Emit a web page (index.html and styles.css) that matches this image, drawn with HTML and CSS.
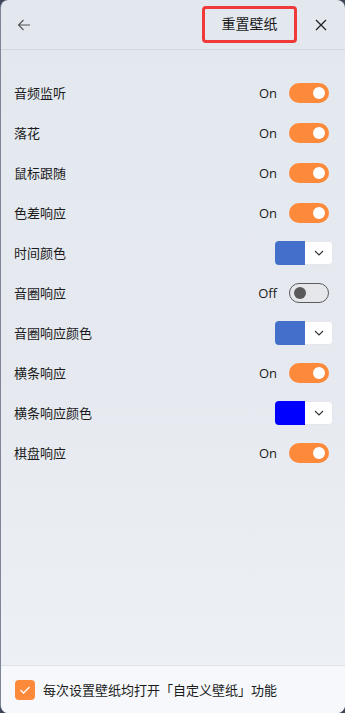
FILE: index.html
```html
<!DOCTYPE html>
<html lang="zh">
<head>
<meta charset="utf-8">
<link rel="stylesheet" href="styles.css">
</head>
<body>
<div class="dialog">
  <header class="header">
    <button class="icon-btn back" aria-label="back">
      <svg width="14" height="14" viewBox="0 0 14 14"><path d="M13 7H1.5M6.5 2L1.5 7l5 5" fill="none" stroke="#555" stroke-width="1.1"/></svg>
    </button>
    <div class="spacer"></div>
    <button class="reset">重置壁纸</button>
    <button class="icon-btn close" aria-label="close">
      <svg width="12" height="12" viewBox="0 0 12 12"><path d="M1 1L11 11M11 1L1 11" fill="none" stroke="#222" stroke-width="1.3"/></svg>
    </button>
  </header>
  <main class="content">
    <div class="row"><span class="label">音频监听</span><span class="state">On</span><span class="toggle on"></span></div>
    <div class="row"><span class="label">落花</span><span class="state">On</span><span class="toggle on"></span></div>
    <div class="row"><span class="label">鼠标跟随</span><span class="state">On</span><span class="toggle on"></span></div>
    <div class="row"><span class="label">色差响应</span><span class="state">On</span><span class="toggle on"></span></div>
    <div class="row"><span class="label">时间颜色</span><span class="picker"><span class="swatch" style="background:#4470cc"></span><span class="drop"><svg width="10" height="6" viewBox="0 0 10 6"><path d="M1 1l4 4 4-4" fill="none" stroke="#333" stroke-width="1.1"/></svg></span></span></div>
    <div class="row"><span class="label">音圈响应</span><span class="state">Off</span><span class="toggle off"></span></div>
    <div class="row"><span class="label">音圈响应颜色</span><span class="picker"><span class="swatch" style="background:#4470cc"></span><span class="drop"><svg width="10" height="6" viewBox="0 0 10 6"><path d="M1 1l4 4 4-4" fill="none" stroke="#333" stroke-width="1.1"/></svg></span></span></div>
    <div class="row"><span class="label">横条响应</span><span class="state">On</span><span class="toggle on"></span></div>
    <div class="row"><span class="label">横条响应颜色</span><span class="picker"><span class="swatch" style="background:#0000ff"></span><span class="drop"><svg width="10" height="6" viewBox="0 0 10 6"><path d="M1 1l4 4 4-4" fill="none" stroke="#333" stroke-width="1.1"/></svg></span></span></div>
    <div class="row"><span class="label">棋盘响应</span><span class="state">On</span><span class="toggle on"></span></div>
  </main>
  <footer class="footer">
    <span class="checkbox"><svg width="12" height="10" viewBox="0 0 12 10"><path d="M1.5 5l3 3 6-6" fill="none" stroke="#fff" stroke-width="1.3"/></svg></span>
    <span class="foot-text">每次设置壁纸均打开「自定义壁纸」功能</span>
  </footer>
</div>
</body>
</html>
```
FILE: styles.css
```css
html, body {
  margin: 0;
  padding: 0;
  height: 100%;
}
body {
  background: #3d4558;
  font-family: "Noto Sans CJK SC", "Noto Sans", sans-serif;
  color: #1b1b1b;
}
.dialog {
  box-sizing: border-box;
  height: 713px;
  width: 345px;
  border-radius: 8px;
  border-left: 1px solid #7d8597;
  background: linear-gradient(180deg, #e3e8ef 0%, #e6eaf0 55%, #eef1f6 100%);
  display: flex;
  flex-direction: column;
  overflow: hidden;
}
.header {
  height: 50px;
  box-sizing: border-box;
  border-bottom: 1px solid #d3d8e0;
  display: flex;
  align-items: center;
  padding: 0 10px 0 8px;
}
.icon-btn {
  border: none;
  background: transparent;
  width: 28px;
  height: 28px;
  padding: 0;
  display: flex;
  align-items: center;
  justify-content: center;
}
.back { margin-left: 1px; }
.spacer { flex: 1; }
.reset {
  font-family: inherit;
  font-size: 14px;
  color: #1b1b1b;
  background: transparent;
  border: 3px solid #f03a3a;
  border-radius: 4px;
  width: 95px;
  height: 37px;
  padding: 0 0 2px 0;
  margin-right: 10px;
  margin-top: -1px;
}
.content {
  flex: 1;
  padding: 23px 12px 0 13px;
}
.row {
  height: 40px;
  display: flex;
  align-items: center;
}
.label {
  flex: 1;
  font-size: 13px;
  padding-bottom: 1px;
}
.state {
  font-family: "Open Sans", "Noto Sans", sans-serif;
  font-size: 13px;
  margin-right: 12px;
}
.toggle {
  box-sizing: border-box;
  width: 40px;
  height: 20px;
  border-radius: 10px;
  position: relative;
  margin-right: 4px;
}
.toggle.on { background: #fd8a3b; }
.toggle.on::after {
  content: "";
  position: absolute;
  right: 4px;
  top: 4px;
  width: 12px;
  height: 12px;
  border-radius: 50%;
  background: #fff;
}
.toggle.off {
  border: 1px solid #5c5c5c;
  background: #e5e7ea;
}
.toggle.off::after {
  content: "";
  position: absolute;
  left: 4px;
  top: 3px;
  width: 12px;
  height: 12px;
  border-radius: 50%;
  background: #5a5a5a;
}
.picker {
  display: flex;
  height: 24px;
  border-radius: 4px;
  overflow: hidden;
}
.swatch {
  width: 30px;
  height: 24px;
}
.drop {
  box-sizing: border-box;
  width: 28px;
  height: 24px;
  background: #fff;
  border: 1px solid #e4e6ea;
  border-left: none;
  border-radius: 0 4px 4px 0;
  display: flex;
  align-items: center;
  justify-content: center;
}
.footer {
  height: 48px;
  box-sizing: border-box;
  border-top: 1px solid #dde1e8;
  background: #f6f8fb;
  display: flex;
  align-items: center;
  padding: 0 0 0 14px;
}
.checkbox {
  width: 20px;
  height: 20px;
  border-radius: 4px;
  background: #fd8a3b;
  display: flex;
  align-items: center;
  justify-content: center;
  margin-right: 8px;
}
.foot-text {
  font-size: 13px;
  padding-bottom: 1px;
}
```
